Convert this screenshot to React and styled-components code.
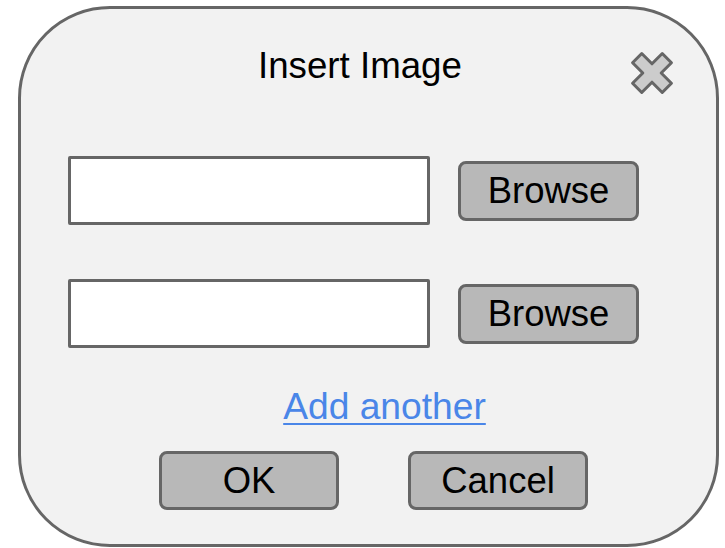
import React from 'react';
import styled, {createGlobalStyle} from "styled-components";

const GlobalStyle = createGlobalStyle`
  html, body {
    margin: 0;
    padding: 0;
    background: #fff;
    font-family: "Liberation Sans", Arial, sans-serif;
  }
`;

const CloseIcon = () => (
    <svg width="44" height="44" viewBox="0 0 44 44">
        <polygon
            points="15.5,1 28.5,1 28.5,15.5 43,15.5 43,28.5 28.5,28.5 28.5,43 15.5,43 15.5,28.5 1,28.5 1,15.5 15.5,15.5"
            transform="rotate(45 22 22)"
            fill="#cccccc"
            stroke="#666666"
            strokeWidth="3"
            strokeLinejoin="round"
        />
    </svg>
);

const App = () => {
    return (
        <>
            <GlobalStyle/>
            <Dialog>
                <Header>
                    <Title>Insert Image</Title>
                    <CloseButton type="button" aria-label="Close">
                        <CloseIcon/>
                    </CloseButton>
                </Header>

                <FileRow $first>
                    <FileInput type="text"/>
                    <Button $width={181} $height={60}>Browse</Button>
                </FileRow>
                <FileRow>
                    <FileInput type="text"/>
                    <Button $width={181} $height={60}>Browse</Button>
                </FileRow>

                <LinkRow>
                    <AddLink href="#">Add another</AddLink>
                </LinkRow>

                <Actions>
                    <Button $width={180} $height={59}>OK</Button>
                    <Button $width={180} $height={59}>Cancel</Button>
                </Actions>
            </Dialog>
        </>
    );
};

const Dialog = styled.div`
    box-sizing: border-box;
    margin: 6px 0 0 18px;
    width: 701px;
    height: 541px;
    border: 3px solid #666;
    border-radius: 92px;
    background-color: #f2f2f2;
    display: flex;
    flex-direction: column;
`;

const Header = styled.div`
    display: flex;
    justify-content: space-between;
    align-items: flex-start;
    padding: 36px 42px 0 237px;
`;

const Title = styled.h1`
    margin: 0;
    font-size: 36.7px;
    line-height: 42px;
    font-weight: 400;
    color: #000;
`;

const CloseButton = styled.button`
    margin-top: 6px;
    padding: 0;
    border: 0;
    background: none;
    display: flex;
    cursor: pointer;
`;

const FileRow = styled.div`
    display: flex;
    align-items: center;
    gap: 28px;
    padding-left: 47px;
    margin-top: ${props => props.$first ? '61px' : '54px'};
`;

const FileInput = styled.input`
    box-sizing: border-box;
    width: 362px;
    height: 69px;
    border: 3px solid #666;
    border-radius: 2px;
    background-color: #fff;
    padding: 0 10px;
    font: inherit;
    font-size: 24px;

    &:focus{
      outline: none;
    }
`;

const Button = styled.button`
    box-sizing: border-box;
    width: ${props => props.$width}px;
    height: ${props => props.$height}px;
    border: 3px solid #666;
    border-radius: 8px;
    background-color: #b8b8b8;
    color: #000;
    font-family: inherit;
    font-size: 36.5px;
    line-height: 1;
    padding: 2px 0 0;
    cursor: pointer;
`;

const LinkRow = styled.div`
    display: flex;
    justify-content: center;
    padding-left: 32px;
    margin-top: 37px;
`;

const AddLink = styled.a`
    font-size: 37.2px;
    line-height: 42px;
    color: #4a86e8;
    text-decoration: underline;
    text-decoration-thickness: 2px;
    text-underline-offset: 4px;
`;

const Actions = styled.div`
    display: flex;
    gap: 69px;
    padding-left: 138px;
    margin-top: 24px;
`;

export default App;
